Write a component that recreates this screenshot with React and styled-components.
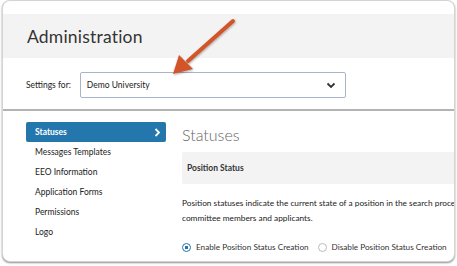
import React from 'react';
import styled, { createGlobalStyle } from 'styled-components';

const GlobalStyle = createGlobalStyle`
  html, body {
    margin: 0;
    padding: 0;
    background: #ffffff;
    font-family: Lato, 'Open Sans', sans-serif;
  }
`;

const navItems = ['Statuses', 'Messages Templates', 'EEO Information', 'Application Forms', 'Permissions', 'Logo'];

const App = () => {
  return (
    <>
      <GlobalStyle />
      <Stage>
        <Frame>
          <TopPanel>
            <HeaderBand>
              <Title>Administration</Title>
            </HeaderBand>
            <SettingsRow>
              <Label>Settings for:</Label>
              <Select>
                <span>Demo University</span>
                <svg width="10" height="7" viewBox="0 0 10 7">
                  <path d="M1.5 1.5 L5 5 L8.5 1.5" fill="none" stroke="#333" strokeWidth="1.8" />
                </svg>
              </Select>
            </SettingsRow>
          </TopPanel>

          <Body>
            <Sidebar>
              {navItems.map((item, i) => (
                <NavItem key={item} $active={i === 0}>
                  {item}
                  {i === 0 && (
                    <svg width="7" height="9" viewBox="0 0 7 9">
                      <path d="M1.5 1 L5 4.5 L1.5 8" fill="none" stroke="#fff" strokeWidth="1.8" />
                    </svg>
                  )}
                </NavItem>
              ))}
            </Sidebar>

            <Main>
              <Heading>Statuses</Heading>
              <SectionBar>Position Status</SectionBar>
              <Paragraph>
                Position statuses indicate the current state of a position in the search process and are visible to search
                <br />
                committee members and applicants.
              </Paragraph>
              <RadioRow>
                <RadioOption>
                  <Radio $checked />
                  Enable Position Status Creation
                </RadioOption>
                <RadioOption>
                  <Radio />
                  Disable Position Status Creation
                </RadioOption>
              </RadioRow>
            </Main>
          </Body>
        </Frame>

        <Arrow width="80" height="70" viewBox="0 0 80 70">
          <defs>
            <filter id="sh" x="-20%" y="-20%" width="140%" height="140%">
              <feDropShadow dx="0.5" dy="1" stdDeviation="0.8" floodColor="#000" floodOpacity="0.35" />
            </filter>
          </defs>
          <g filter="url(#sh)">
            <line x1="62" y1="10" x2="17" y2="50" stroke="#d2552b" strokeWidth="4" strokeLinecap="round" />
            <polygon points="2,63 8,44 22,58" fill="#d2552b" />
          </g>
        </Arrow>
      </Stage>
    </>
  );
};

const Stage = styled.div`
  position: relative;
  width: 457px;
  height: 266px;
  overflow: hidden;
`;

const Frame = styled.div`
  margin: 0 2px 0 2px;
  height: 262px;
  box-sizing: border-box;
  border: 1px solid #d4d4d4;
  border-radius: 8px;
  box-shadow: 0 1px 2px rgba(0, 0, 0, 0.45);
  background: #fff;
  overflow: hidden;
  display: flex;
  flex-direction: column;
`;

const TopPanel = styled.div`
  padding-top: 13px;
  border-bottom: 2px solid #b3b3b3;
  height: 110px;
  box-sizing: border-box;
`;

const HeaderBand = styled.div`
  background: #f3f3f3;
  height: 44px;
  display: flex;
  align-items: center;
  padding-left: 24px;
`;

const Title = styled.h1`
  margin: 0;
  font-size: 17.5px;
  font-weight: 400;
  color: #333;
  letter-spacing: 0.2px;
`;

const SettingsRow = styled.div`
  display: flex;
  align-items: center;
  padding: 14px 0 0 23px;
  gap: 9px;
`;

const Label = styled.span`
  font-size: 8.5px;
  color: #222;
`;

const Select = styled.div`
  width: 266px;
  height: 26px;
  box-sizing: border-box;
  border: 1px solid #a8b4c8;
  border-radius: 2px;
  display: flex;
  align-items: center;
  justify-content: space-between;
  padding: 0 9px 0 6px;
  font-size: 8.5px;
  color: #222;
`;

const Body = styled.div`
  display: flex;
  padding: 11px 0 0 23px;
  gap: 16px;
`;

const Sidebar = styled.nav`
  width: 140px;
  flex-shrink: 0;
  display: flex;
  flex-direction: column;
`;

const NavItem = styled.div`
  height: 20px;
  display: flex;
  align-items: center;
  justify-content: space-between;
  padding: 0 5px 0 9px;
  border-radius: 2px;
  font-size: 8.5px;
  font-weight: ${p => (p.$active ? 700 : 400)};
  color: ${p => (p.$active ? '#fff' : '#222')};
  background: ${p => (p.$active ? '#2477ad' : 'transparent')};
`;

const Main = styled.div`
  width: 380px;
  flex-shrink: 0;
  display: flex;
  flex-direction: column;
`;

const Heading = styled.h2`
  margin: 0 0 6px 0;
  height: 24px;
  display: flex;
  align-items: center;
  font-size: 16px;
  font-weight: 300;
  color: #666;
`;

const SectionBar = styled.div`
  height: 32px;
  display: flex;
  align-items: center;
  padding-left: 5px;
  background: #f3f3f3;
  border-radius: 2px;
  font-size: 8.5px;
  font-weight: 700;
  color: #333;
`;

const Paragraph = styled.p`
  margin: 12px 0 0 0;
  font-size: 8.3px;
  line-height: 15px;
  color: #222;
  white-space: nowrap;
`;

const RadioRow = styled.div`
  display: flex;
  gap: 9px;
  margin-top: 16px;
`;

const RadioOption = styled.label`
  display: flex;
  align-items: center;
  gap: 5px;
  font-size: 8.2px;
  color: #333;
  white-space: nowrap;
`;

const Radio = styled.span`
  width: 9px;
  height: 9px;
  box-sizing: border-box;
  border-radius: 50%;
  border: 1.5px solid ${p => (p.$checked ? '#2477ad' : '#bbb')};
  background: ${p => (p.$checked ? 'radial-gradient(circle, #2477ad 0 1.6px, #fff 2px)' : '#fff')};
`;

const Arrow = styled.svg`
  position: absolute;
  left: 171px;
  top: 11px;
`;

export default App;
